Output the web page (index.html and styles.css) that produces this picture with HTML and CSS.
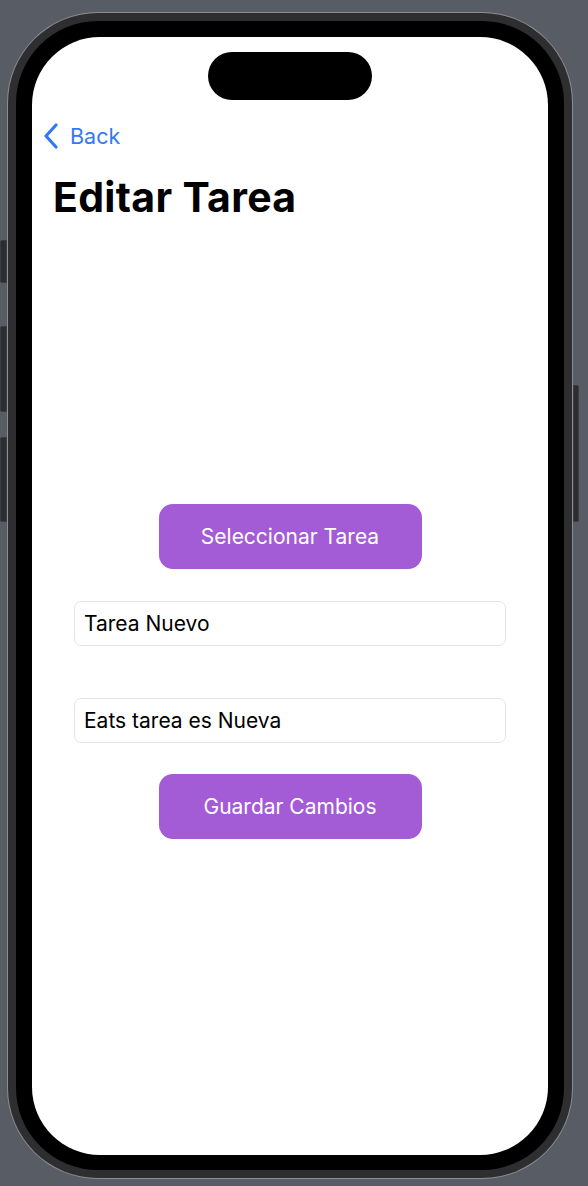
FILE: index.html
```html
<!DOCTYPE html>
<html lang="es">
<head>
<meta charset="utf-8">
<title>Editar Tarea</title>
<link rel="stylesheet" href="styles.css">
</head>
<body>
<div class="device">
  <span class="side-btn left b1"></span>
  <span class="side-btn left b2"></span>
  <span class="side-btn left b3"></span>
  <span class="side-btn right b4"></span>
  <div class="frame">
    <div class="bezel">
      <div class="screen">
        <div class="island"></div>
        <div class="nav">
          <svg class="chevron" width="16" height="26" viewBox="0 0 16 26" aria-hidden="true">
            <polyline points="13,2 3,13 13,24" fill="none" stroke="currentColor" stroke-width="3.2" stroke-linecap="round" stroke-linejoin="round"/>
          </svg>
          <span class="back-label">Back</span>
        </div>
        <h1 class="title">Editar Tarea</h1>
        <div class="content">
          <button class="action">Seleccionar Tarea</button>
          <div class="field first">Tarea Nuevo</div>
          <div class="field second">Eats tarea es Nueva</div>
          <button class="action last">Guardar Cambios</button>
        </div>
      </div>
    </div>
  </div>
</div>
</body>
</html>
```

FILE: styles.css
```css
* { box-sizing: border-box; }
html, body { margin: 0; padding: 0; }
body {
  width: 588px;
  height: 1186px;
  background: #585c64;
  font-family: Inter, "Noto Sans", sans-serif;
  overflow: hidden;
}
.device {
  position: relative;
  width: 588px;
  height: 1186px;
  padding: 13px 16px 0 8px;
}
.frame {
  width: 564px;
  height: 1165px;
  border-radius: 90px;
  background: #2e2e30;
  box-shadow: 0 0 0 1px #8c8d90;
  padding: 8px;
}
.bezel {
  width: 100%;
  height: 100%;
  background: #000;
  border-radius: 82px;
  padding: 16px 16px 15px 16px;
}
.screen {
  width: 516px;
  height: 1118px;
  background: #fff;
  border-radius: 68px;
  overflow: hidden;
  display: flex;
  flex-direction: column;
  align-items: stretch;
}
.island {
  align-self: center;
  width: 164px;
  height: 48px;
  border-radius: 24px;
  background: #000;
  margin-top: 15px;
  flex: none;
}
.nav {
  height: 44px;
  margin-top: 14px;
  display: flex;
  align-items: center;
  padding-left: 11px;
  color: #3478f6;
  flex: none;
}
.chevron { display: block; margin-right: 11px; margin-top: -1px; }
.back-label {
  font-size: 21.5px;
  line-height: 26px;
  color: #3478f6;
}
.title {
  margin: 15px 0 0 21px;
  font-size: 41px;
  line-height: 49px;
  font-weight: 700;
  color: #000;
  letter-spacing: 0.3px;
}
.content {
  display: flex;
  flex-direction: column;
  align-items: center;
  padding-top: 282px;
}
.action {
  width: 263px;
  height: 65px;
  border: none;
  border-radius: 14px;
  background: #a35bd6;
  color: #fff;
  font-family: Inter, "Noto Sans", sans-serif;
  font-size: 21px;
  font-weight: 400;
  padding: 0;
}
.action.last { margin-top: 31px; }
.field {
  width: 432px;
  height: 45px;
  border: 1px solid #e4e4e4;
  border-radius: 7px;
  padding-left: 9px;
  display: flex;
  align-items: center;
  font-size: 21px;
  color: #000;
}
.field.first { margin-top: 32px; }
.field.second { margin-top: 52px; }
.side-btn {
  position: absolute;
  width: 7px;
  background: #2c2d30;
  border: 1px solid #3b3d42;
}
.side-btn.left { left: 0; border-radius: 2px 0 0 2px; }
.side-btn.right { left: 573px; width: 6px; border-radius: 0 2px 2px 0; }
.b1 { top: 240px; height: 43px; }
.b2 { top: 326px; height: 86px; }
.b3 { top: 437px; height: 85px; }
.b4 { top: 385px; height: 137px; }
```
